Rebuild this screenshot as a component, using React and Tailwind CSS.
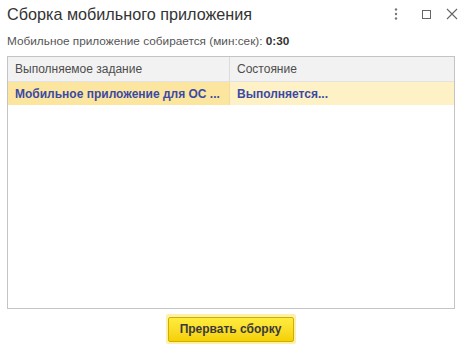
import React from "react";

export default function App() {
  return (
    <div className="w-[464px] h-[346px] bg-white relative overflow-hidden" style={{ fontFamily: '"Liberation Sans", Arial, sans-serif' }}>
      <div className="flex items-center h-[28px] pl-[7px] pr-[6px]">
        <div className="text-[16.2px] text-[#333] leading-none flex-1 pt-[1px]">Сборка мобильного приложения</div>
        <div className="flex items-center">
          <svg width="8" height="14" viewBox="0 0 8 14"><circle cx="4" cy="2.5" r="1.2" fill="#777"/><circle cx="4" cy="7" r="1.2" fill="#777"/><circle cx="4" cy="11.5" r="1.2" fill="#777"/></svg>
          <svg className="ml-[21px]" width="11" height="11" viewBox="0 0 11 11"><rect x="1.5" y="1.5" width="8" height="8" fill="none" stroke="#666" strokeWidth="1"/></svg>
          <svg className="ml-[14px]" width="12" height="12" viewBox="0 0 12 12"><path d="M1 1L11 11M11 1L1 11" stroke="#666" strokeWidth="1.1"/></svg>
        </div>
      </div>
      <div className="pl-[7px] mt-[6px] text-[11.8px] text-[#555] leading-[15px]">
        Мобильное приложение собирается (мин:сек): <span className="font-bold text-[#333]">0:30</span>
      </div>
      <div className="mx-[7px] mt-[7px] h-[253px] border border-[#c4c4c4] flex flex-col w-[448px]">
        <div className="flex h-[25px] bg-[#f2f2f2] border-b border-[#e2e2e2] text-[12px] text-[#4d4d4d]">
          <div className="w-[222px] border-r border-[#dcdcdc] flex items-center pl-[7px]">Выполняемое задание</div>
          <div className="flex-1 flex items-center pl-[7px]">Состояние</div>
        </div>
        <div className="flex h-[23px] text-[12px] font-bold text-[#3b4aa6]">
          <div className="w-[222px] bg-[#fbe59f] border-r border-[#f0dca0] flex items-center pl-[7px] whitespace-nowrap overflow-hidden">Мобильное приложение для ОС ...</div>
          <div className="flex-1 bg-[#fdf1c5] flex items-center pl-[7px]">Выполняется...</div>
        </div>
      </div>
      <div className="flex justify-center mt-[5px]">
        <div className="p-[2px] bg-[#fff0a8] rounded-[2px] ml-[-3px]">
          <button className="w-[126px] h-[25px] rounded-[2px] border border-[#cfae00] bg-gradient-to-b from-[#ffec3d] to-[#f5d000] text-[12px] font-bold text-[#3a3a3a] leading-none" style={{ fontFamily: '"Liberation Sans", Arial, sans-serif' }}>
            Прервать сборку
          </button>
        </div>
      </div>
    </div>
  );
}
